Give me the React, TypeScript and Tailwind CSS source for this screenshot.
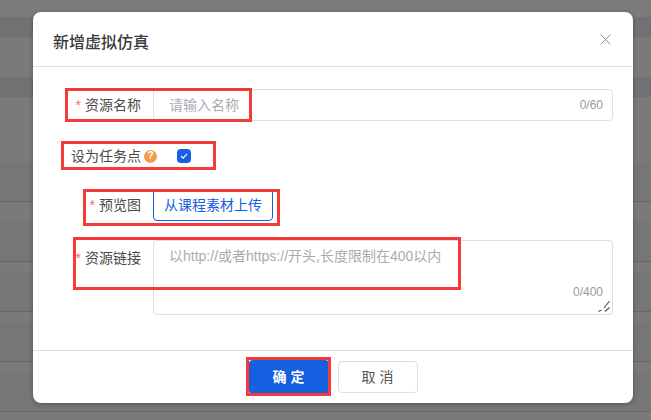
import React from "react";

const stripes: [string, string][] = [
  ["h-[17px]", "bg-[#7b7b7b]"],
  ["h-[20px]", "bg-[#707173]"],
  ["h-[40px]", "bg-[#7a7a7a]"],
  ["h-[20px]", "bg-[#707173]"],
  ["h-[65px]", "bg-[#7a7a7a]"],
  ["h-[39px]", "bg-[#757776]"],
  ["h-[1px]", "bg-[#666666]"],
  ["h-[20px]", "bg-[#7a7a7a]"],
  ["h-[39px]", "bg-[#757776]"],
  ["h-[1px]", "bg-[#666666]"],
  ["h-[10px]", "bg-[#7a7a7a]"],
  ["h-[39px]", "bg-[#757776]"],
  ["h-[1px]", "bg-[#666666]"],
  ["h-[10px]", "bg-[#7a7a7a]"],
  ["h-[39px]", "bg-[#757776]"],
  ["h-[1px]", "bg-[#666666]"],
  ["h-[10px]", "bg-[#7a7a7a]"],
  ["h-[39px]", "bg-[#757776]"],
  ["h-[1px]", "bg-[#666666]"],
  ["h-[8px]", "bg-[#7a7a7a]"],
];

function Label({ required, children }: { required?: boolean; children: React.ReactNode }) {
  return (
    <div className="w-[120px] shrink-0 pr-3 text-right text-sm leading-8 text-[#4a4a4a]">
      {required && <span className="mr-1 text-[#f56c6c]">*</span>}
      {children}
    </div>
  );
}

export default function App() {
  return (
    <div className="relative h-[420px] w-[651px] overflow-hidden bg-[#7a7a7a] font-['Liberation_Sans','Noto_Sans_CJK_SC',sans-serif]">
      {stripes.map(([h, c], i) => (
        <div key={i} className={`${h} ${c}`} />
      ))}

      <div className="absolute left-[33px] top-[12px] flex h-[391px] w-[600px] flex-col rounded-lg bg-white shadow-[0_1px_4px_rgba(0,0,0,0.3)]">
        <div className="flex h-[55px] shrink-0 items-center justify-between border-b border-[#dcdfe6] pl-5 pr-[22px]">
          <span className="mt-2 text-base font-medium leading-none text-[#3a3a3a]">新增虚拟仿真</span>
          <svg width="11" height="11" viewBox="0 0 11 11" className="text-[#8c8c8c]" fill="none" stroke="currentColor" strokeWidth="1">
            <path d="M0.5 0.5L10.5 10.5M10.5 0.5L0.5 10.5" />
          </svg>
        </div>

        <div className="flex flex-1 flex-col pr-5 pt-[22px]">
          <div className="flex h-8">
            <Label required>资源名称</Label>
            <div className="flex flex-1 items-center justify-between rounded border border-[#dcdfe6] pl-[15px] pr-[9px] text-sm">
              <span className="text-[#a8abb2]">请输入名称</span>
              <span className="text-xs text-[#999999]">0/60</span>
            </div>
          </div>

          <div className="mt-[19px] flex h-8 items-center">
            <div className="flex w-[144px] shrink-0 items-center pl-[38px] text-sm text-[#4a4a4a]">
              <span className="whitespace-nowrap">设为任务点</span>
              <span className="ml-[3px] flex h-[13px] w-[13px] shrink-0 items-center justify-center rounded-full bg-[#f7994a] text-[10px] font-bold leading-none text-white">?</span>
            </div>
            <span className="flex h-[14px] w-[14px] items-center justify-center rounded-sm bg-[#1560e0]">
              <svg width="10" height="10" viewBox="0 0 10 10" fill="none" stroke="white" strokeWidth="1.2">
                <path d="M2 5.2L4.2 7.2L8 2.8" />
              </svg>
            </span>
          </div>

          <div className="mt-[17px] flex h-8">
            <Label required>预览图</Label>
            <div className="flex w-[120px] items-center justify-center rounded border border-[#1560e0] text-sm text-[#1560e0]">从课程素材上传</div>
          </div>

          <div className="relative mt-[19px] flex h-[75px]">
            <div className="pt-[2px]">
              <Label required>资源链接</Label>
            </div>
            <div className="relative flex-1 rounded border border-[#dcdfe6] pl-[15px] pt-[4px] text-sm leading-[22px] text-[#a8abb2]">
              以http://或者https://开头,长度限制在400以内
              <span className="absolute bottom-[14px] right-[9px] text-xs leading-4 text-[#999999]">0/400</span>
              <svg width="14" height="14" viewBox="0 0 14 14" className="absolute bottom-0 right-0" fill="none" stroke="#555555" strokeWidth="1.2">
                <path d="M0.5 11.5L3.5 10M6 8L11.5 1M7 11.5L11.5 7.5" />
              </svg>
            </div>
          </div>
        </div>

        <div className="flex h-[53px] shrink-0 items-center justify-center gap-[9px] border-t border-[#dcdfe6]">
          <div className="flex h-[34px] w-20 items-center justify-center rounded-sm bg-[#1560e0] text-sm font-bold text-white">确 定</div>
          <div className="flex h-8 w-20 items-center justify-center rounded border border-[#dcdfe6] text-sm text-[#555555]">取 消</div>
        </div>
      </div>

      <div className="absolute left-[65px] top-[88px] h-[34px] w-[187px] border-[3px] border-[#f53a3a]" />
      <div className="absolute left-[61px] top-[141px] h-[29px] w-[155px] border-[3px] border-[#f53a3a]" />
      <div className="absolute left-[83px] top-[189px] h-[37px] w-[197px] border-[3px] border-[#f53a3a]" />
      <div className="absolute left-[73px] top-[237px] h-[53px] w-[388px] border-[3px] border-[#f53a3a]" />
      <div className="absolute left-[246px] top-[357px] h-[39px] w-[85px] border-[3px] border-[#f53a3a]" />
    </div>
  );
}
